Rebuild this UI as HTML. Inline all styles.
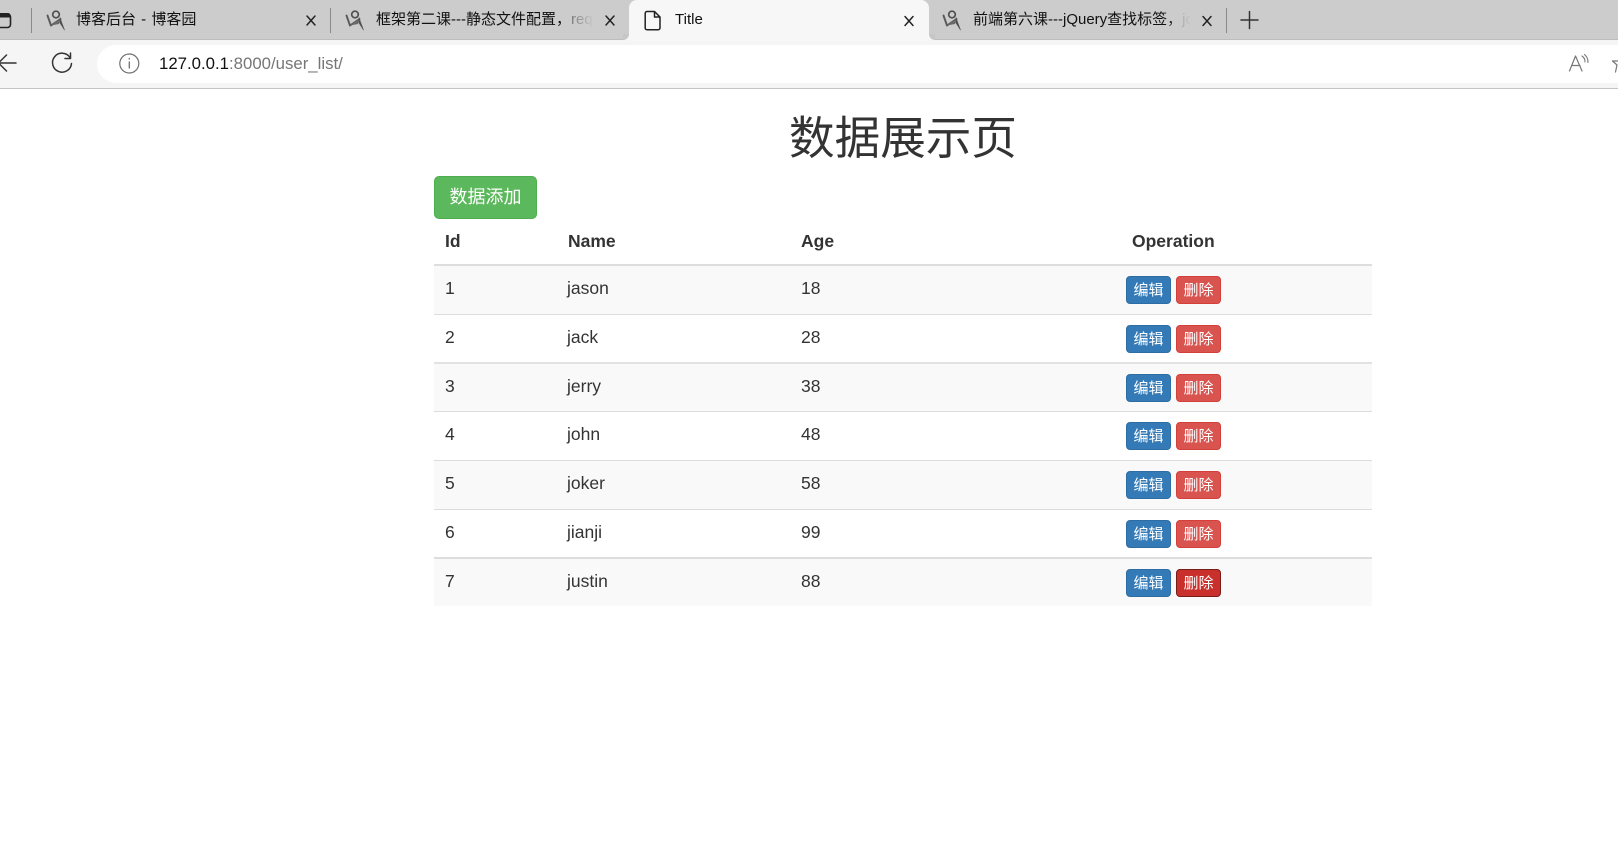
<!DOCTYPE html>
<html lang="zh"><head><meta charset="utf-8"><title>Title</title>
<style>
html,body{margin:0;padding:0;background:#fff;width:1618px;height:862px;overflow:hidden}
body{position:relative;font-family:"Liberation Sans","Noto Sans CJK SC",sans-serif;color:#333}
.a{position:absolute;white-space:nowrap}
.strip{left:0;top:0;width:1618px;height:40px;background:#ccc;box-shadow:inset 0 -1px 0 #bdbdbd}
.tool{left:0;top:40px;width:1618px;height:48px;background:#f5f5f5}
.line{left:0;top:88px;width:1618px;height:1px;background:#c4c4c4}
.omni{left:97px;top:45px;width:1540px;height:38px;border-radius:19px;background:#fff}
.sep{top:8px;width:1px;height:25px;background:#8a8a8a}
.tab{left:629px;top:0;width:300px;height:41px;background:#f7f7f7;border-radius:8px 8px 0 0}
.cor{top:34px;width:6px;height:6px;background:#f7f7f7}
.cor i{display:block;width:6px;height:6px;background:#c6c6c6}
.tabtext{top:9px;height:22px;line-height:22px;font-size:15px;color:#111;overflow:hidden}
.fade{-webkit-mask-image:linear-gradient(to right,#000 calc(100% - 24px),transparent);mask-image:linear-gradient(to right,#000 calc(100% - 24px),transparent)}
.url{left:159px;top:52px;height:24px;line-height:24px;font-size:16.8px;color:#767676}
.url b{font-weight:400;color:#111}
h1{position:absolute;margin:0;left:432px;width:942px;top:107px;height:64px;line-height:64px;text-align:center;font-size:45.6px;font-weight:400;color:#333}
.add{left:434px;top:176px;width:103px;height:43px;line-height:41px;box-sizing:border-box;background:#5cb85c;border:1px solid #4cae4c;border-radius:5px;color:#fff;font-size:18px;text-align:center}
.th{top:229px;height:24px;line-height:24px;font-size:17.5px;font-weight:700;color:#333}
.stripe{left:434px;width:938px;background:#f9f9f9}
.rule{left:434px;width:938px;background:#ddd;height:1px}
.td{height:24px;line-height:24px;font-size:17.5px;color:#333}
.btn{height:28px;line-height:27px;box-sizing:border-box;width:45px;border-radius:4px;color:#fff;font-size:15px;text-align:center;border:1px solid}
.blue{left:1126px;background:#337ab7;border-color:#2e6da4}
.red{left:1176px;background:#d9534f;border-color:#d43f3a}
.dark{background:#c9302c;border-color:#761c19}
svg{position:absolute;overflow:visible}
</style></head><body>
<div class="a strip"></div>
<div class="a tool"></div>
<div class="a line"></div>
<div class="a omni"></div>
<div class="a cor" style="left:623px"><i style="border-bottom-right-radius:6px"></i></div>
<div class="a cor" style="left:929px"><i style="border-bottom-left-radius:6px"></i></div>
<div class="a tab"></div>
<div class="a sep" style="left:31px"></div>
<div class="a sep" style="left:330px"></div>
<div class="a sep" style="left:1226px"></div>

<svg width="1618" height="90" style="left:0;top:0" fill="none" stroke-linecap="round" stroke-linejoin="round">
<defs>
<g id="blog">
<circle cx="9.500" cy="4.500" r="3.300" stroke="#4f4f4f" stroke-width="1.700"/>
<path d="M1 5.500L4.500 15.500 14 9" stroke="#5a5a5a" stroke-width="1.900"/>
<path d="M4.500 15.500L14 9 12.500 14z" fill="#6a6a6a" stroke="none"/>
<path d="M13.500 7.500L15 12 18 20 13.500 13z" fill="#4f4f4f" stroke="#4f4f4f" stroke-width=".6"/>
</g>
</defs>
<!-- window icon -->
<path d="M-4 14h11.500a3 3 0 0 1 3 3v7.500a3 3 0 0 1-3 3h-11.500" stroke="#222" stroke-width="1.600"/>
<path d="M-4 13h12a2.500 2.500 0 0 1 2.500 2.500v2h-14.500z" fill="#222"/>
<!-- cnblogs icons -->
<use href="#blog" x="46.500" y="10"/>
<use href="#blog" x="345.500" y="10"/>
<use href="#blog" x="942.500" y="10"/>
<!-- file icon -->
<path d="M647 11.500h7.500l5.500 5.500v11a1.800 1.800 0 0 1-1.800 1.800h-11.200a1.800 1.800 0 0 1-1.800-1.800v-14.700a1.800 1.800 0 0 1 1.800-1.800zM654.500 11.500v5.500h5.500" stroke="#222" stroke-width="1.500"/>
<!-- close icons -->
<g stroke="#222" stroke-width="1.500">
<path d="M307 16l8 9M315 16l-8 9"/>
<path d="M606 16l8 9M614 16l-8 9"/>
<path d="M905 16.500l8 9M913 16.500l-8 9"/>
<path d="M1203 16.500l8 9M1211 16.500l-8 9"/>
</g>
<!-- plus -->
<path d="M1241 20h17M1249.500 11.500v17" stroke="#333" stroke-width="1.500"/>
<!-- back arrow -->
<path d="M16 63H-1M6.500 55l-8 8 8 8" stroke="#333" stroke-width="1.500"/>
<!-- reload -->
<path d="M70 57.500a9.500 9.500 0 1 0 1.500 6M70.500 53v5.500h-5.500" stroke="#333" stroke-width="1.500"/>
<!-- info -->
<circle cx="129.300" cy="63.500" r="9.500" stroke="#6f6f6f" stroke-width="1.200"/>
<path d="M129.300 62v6M129.300 58.500v.500" stroke="#6f6f6f" stroke-width="1.300"/>
<!-- read aloud -->
<path d="M1569.500 71l6-15 6.500 15M1572 65.500h8" stroke="#777" stroke-width="1.200"/>
<path d="M1582 56a7 7 0 0 1 3 6M1584.500 54.500a10 10 0 0 1 3.500 8" stroke="#777" stroke-width="1.100"/>
<!-- favorite star clipped -->
<path d="M1612.500 61h7M1612.500 61l4.500 4-1.500 7" stroke="#777" stroke-width="1.200"/>
</svg>

<div class="a tabtext" style="left:76px;width:210px;word-spacing:1px">博客后台 - 博客园</div>
<div class="a tabtext fade" style="left:376px;width:218px">框架第二课---静态文件配置，<span style="color:#777">req</span></div>
<div class="a tabtext" style="left:675px">Title</div>
<div class="a tabtext fade" style="left:973px;width:218px">前端第六课---jQuery查找标签，<span style="color:#777">jq</span></div>
<div class="a url"><b>127.0.0.1</b>:8000/user_list/</div>

<h1>数据展示页</h1>
<div class="a add">数据添加</div>

<div class="a th" style="left:445px">Id</div>
<div class="a th" style="left:568px">Name</div>
<div class="a th" style="left:801px">Age</div>
<div class="a th" style="left:1132px">Operation</div>

<div class="a stripe" style="top:266px;height:48px"></div>
<div class="a stripe" style="top:363px;height:48px"></div>
<div class="a stripe" style="top:461px;height:48px"></div>
<div class="a stripe" style="top:559px;height:47px"></div>

<div class="a rule" style="top:264px;height:2px"></div>
<div class="a rule" style="top:314px"></div>
<div class="a rule" style="top:362px;height:2px;background:#e2e2e2"></div>
<div class="a rule" style="top:411px"></div>
<div class="a rule" style="top:460px"></div>
<div class="a rule" style="top:509px"></div>
<div class="a rule" style="top:557px;height:2px"></div>

<div class="a td" style="left:445px;top:276px">1</div><div class="a td" style="left:567px;top:276px">jason</div><div class="a td" style="left:801px;top:276px">18</div>
<div class="a td" style="left:445px;top:325px">2</div><div class="a td" style="left:567px;top:325px">jack</div><div class="a td" style="left:801px;top:325px">28</div>
<div class="a td" style="left:445px;top:374px">3</div><div class="a td" style="left:567px;top:374px">jerry</div><div class="a td" style="left:801px;top:374px">38</div>
<div class="a td" style="left:445px;top:422px">4</div><div class="a td" style="left:567px;top:422px">john</div><div class="a td" style="left:801px;top:422px">48</div>
<div class="a td" style="left:445px;top:471px">5</div><div class="a td" style="left:567px;top:471px">joker</div><div class="a td" style="left:801px;top:471px">58</div>
<div class="a td" style="left:445px;top:520px">6</div><div class="a td" style="left:567px;top:520px">jianji</div><div class="a td" style="left:801px;top:520px">99</div>
<div class="a td" style="left:445px;top:569px">7</div><div class="a td" style="left:567px;top:569px">justin</div><div class="a td" style="left:801px;top:569px">88</div>

<div class="a btn blue" style="top:276px">编辑</div><div class="a btn red" style="top:276px">删除</div>
<div class="a btn blue" style="top:325px">编辑</div><div class="a btn red" style="top:325px">删除</div>
<div class="a btn blue" style="top:374px">编辑</div><div class="a btn red" style="top:374px">删除</div>
<div class="a btn blue" style="top:422px">编辑</div><div class="a btn red" style="top:422px">删除</div>
<div class="a btn blue" style="top:471px">编辑</div><div class="a btn red" style="top:471px">删除</div>
<div class="a btn blue" style="top:520px">编辑</div><div class="a btn red" style="top:520px">删除</div>
<div class="a btn blue" style="top:569px">编辑</div><div class="a btn red dark" style="top:569px">删除</div>
</body></html>
